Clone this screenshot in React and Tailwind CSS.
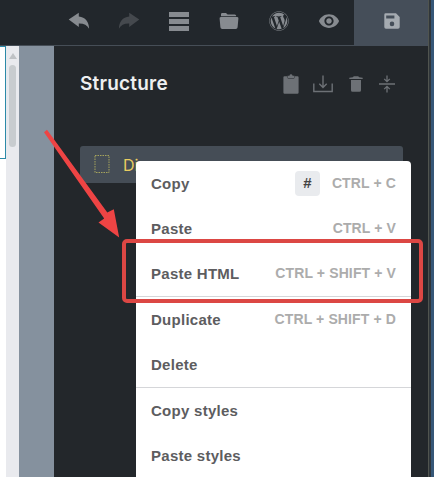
import { FaWordpress } from "react-icons/fa";
import { MdRemoveRedEye } from "react-icons/md";

function Undo({ className = "" }) {
  return (
    <svg viewBox="0 0 22 18" className={"h-[18px] w-[22px] " + className} fill="currentColor">
      <path d="M.7 7.5 10.8.8v3.7C17.4 5 20.9 9.7 21.1 16.8c-1.9-3.6-5.1-5.3-10.3-5.2v3.3Z" />
    </svg>
  );
}

function Bars() {
  return (
    <span className="flex h-[19px] w-5 flex-col justify-between">
      <span className="h-[5px] bg-current" />
      <span className="h-[5px] bg-current" />
      <span className="h-[5px] bg-current" />
    </span>
  );
}

function Folder() {
  return (
    <svg viewBox="0 0 20 18" className="h-[18px] w-5" fill="currentColor">
      <path d="M2 4V2.2Q2 1 3.2 1H7l1.6 1.4h7.2Q17.2 2.4 17.2 4v.3H2ZM1.8 5h16.5Q19.6 5 19.4 6.5l-.8 8.8Q18.4 17 16.8 17H3.2Q1.6 17 1.4 15.3L.6 6.5Q.4 5 1.8 5Z" />
    </svg>
  );
}

function Save() {
  return (
    <svg viewBox="0 0 16 16" className="h-4 w-4" fill="currentColor">
      <path fillRule="evenodd" d="M1.7.3H12L15.7 4v10q0 1.7-1.7 1.7H2Q.3 15.7.3 14V1.7Q.3.3 1.7.3ZM2.2 2.4v3h8.2v-3ZM8 8.6a2.3 2.3 0 1 0 0 4.6 2.3 2.3 0 0 0 0-4.6Z" />
    </svg>
  );
}

function StructureActions() {
  return (
    <div className="flex items-center text-[#6d7176]">
      <svg viewBox="0 0 16 20" className="h-5 w-4" fill="currentColor">
        <path d="M1.5 2.2H4Q4 4.4 5.2 4.4h5.6Q12 4.4 12 2.2h2.5q1.1 0 1.1 1.1v15.2q0 1.2-1.2 1.2H1.6Q.4 19.7.4 18.5V3.3Q.4 2.2 1.5 2.2Z" />
        <path d="M4.5 4V1.7h1.9q.4-1.4 1.6-1.4t1.6 1.4h1.9V4Z" />
      </svg>
      <svg viewBox="0 0 20 18" className="ml-3.5 h-[18px] w-5" fill="none" stroke="currentColor" strokeWidth="1.4">
        <path d="M10 .5v12M6.3 8.8 10 12.5l3.7-3.7M1.5 9.3H.8v7.2h18.4V9.3h-.7" />
      </svg>
      <svg viewBox="0 0 14 16" className="ml-4 h-4 w-3.5" fill="currentColor">
        <path d="M.3 3V1.8l3.5-.5L4.8.3h4.4l1 1 3.5.5V3ZM2 3.9h10v10.4q0 1.5-1.5 1.5h-7Q2 15.8 2 14.3Z" />
      </svg>
      <svg viewBox="0 0 16 18" className="ml-4 h-[18px] w-4" fill="none" stroke="currentColor" strokeWidth="1.3">
        <path d="M0 9h16M8 .5v6M5.2 3.9 8 6.7l2.8-2.8M8 17.5v-6M5.2 14.1 8 11.3l2.8 2.8" />
      </svg>
    </div>
  );
}

function Item({ label, keys, hash }) {
  return (
    <div className="flex h-[45px] shrink-0 items-center justify-between px-[15px]">
      <span className="pt-0.5 text-[15px] font-bold tracking-[0.27px] text-[#5d5d5f]">{label}</span>
      <span className="flex items-center">
        {hash && (
          <span className="mr-3 flex h-[25px] w-[25px] items-center justify-center rounded bg-[#e9ebee] text-[15px] font-bold text-[#444]">
            #
          </span>
        )}
        {keys && <span className="text-[14px] font-bold tracking-[0.12px] text-[#acacac]">{keys}</span>}
      </span>
    </div>
  );
}

export default function App() {
  return (
    <div className="relative flex h-[477px] w-[434px] overflow-hidden bg-[#23272b] font-['Liberation_Sans',Arial,sans-serif]">
      <div className="flex w-[428px] shrink-0 flex-col">
        <header className="flex h-[46px] shrink-0 border-b border-[#464e57] bg-[#22272c] pl-[54px] text-[#878b90]">
          <div className="grid h-[42px] grid-cols-[repeat(6,50px)] place-items-center">
            <Undo />
            <Undo className="-scale-x-100 text-[#45494e]" />
            <Bars />
            <Folder />
            <FaWordpress className="h-5 w-5" />
            <MdRemoveRedEye className="h-[22px] w-[22px]" />
          </div>
          <div className="flex h-[46px] w-[74px] items-center justify-center bg-[#454e59] pb-1 pl-0.5 text-[#a5abb1]">
            <Save />
          </div>
        </header>
        <div className="flex flex-1">
          <div className="w-1.5 bg-white">
            <div className="h-[113px] border-t border-r border-b border-[#2c8aa8]" />
          </div>
          <div className="flex w-[13px] flex-col items-center bg-[#e9eaee] pt-[7px]">
            <svg viewBox="0 0 8 6" className="h-1.5 w-2" fill="#bfc2c5">
              <path d="M4 0 8 6H0Z" />
            </svg>
            <div className="mt-[6px] h-[82px] w-[7px] rounded-full bg-[#c8cccf]" />
          </div>
          <div className="w-[35px] bg-[#85919e]" />
          <main className="flex flex-1 flex-col pl-[26px]">
            <div className="flex h-[76px] items-center justify-between pr-[33px]">
              <h1 className="font-['Inter',sans-serif] text-[19px] font-semibold tracking-[0.2px] text-[#eeeff0]">Structure</h1>
              <StructureActions />
            </div>
            <div className="mt-6 flex h-[37px] w-[323px] items-center rounded-[3px] bg-[#454d56] pl-[14px] font-['Inter',sans-serif] text-base text-[#e9cd60]">
              <svg viewBox="0 0 16 20" className="mb-0.5 h-5 w-4" fill="none" stroke="#a6a45c">
                <path strokeDasharray="1.5 1" d="M1 1.5h14v17H1Z" />
              </svg>
              <span className="ml-[13px]">Div</span>
            </div>
          </main>
        </div>
      </div>
      <div className="w-[3px] border-l border-[#50544f] bg-[#30363a]" />
      <div className="w-[3px] bg-[#365777]" />

      <div className="absolute top-[161px] left-[136px] flex h-[320px] w-[275px] flex-col rounded-[4px] bg-white">
        <Item label="Copy" keys="CTRL + C" hash />
        <Item label="Paste" keys="CTRL + V" />
        <Item label="Paste HTML" keys="CTRL + SHIFT + V" />
        <div className="h-px shrink-0 bg-[#d5d6d9]" />
        <Item label="Duplicate" keys="CTRL + SHIFT + D" />
        <Item label="Delete" />
        <div className="h-px shrink-0 bg-[#d5d6d9]" />
        <Item label="Copy styles" />
        <Item label="Paste styles" />
      </div>

      <div className="absolute top-[239px] left-[122px] h-[64px] w-[301px] rounded-[5px] border-4 border-[#dc4744]" />
      <svg viewBox="0 0 90 120" className="absolute top-[125px] left-[40px] h-[120px] w-[90px]" fill="#ee4444">
        <path d="M4 7.2 7 4.8 67.3 87.6 73.8 84.2 79.2 112.5 58.5 97.4 64.2 93.4Z" />
      </svg>
    </div>
  );
}
